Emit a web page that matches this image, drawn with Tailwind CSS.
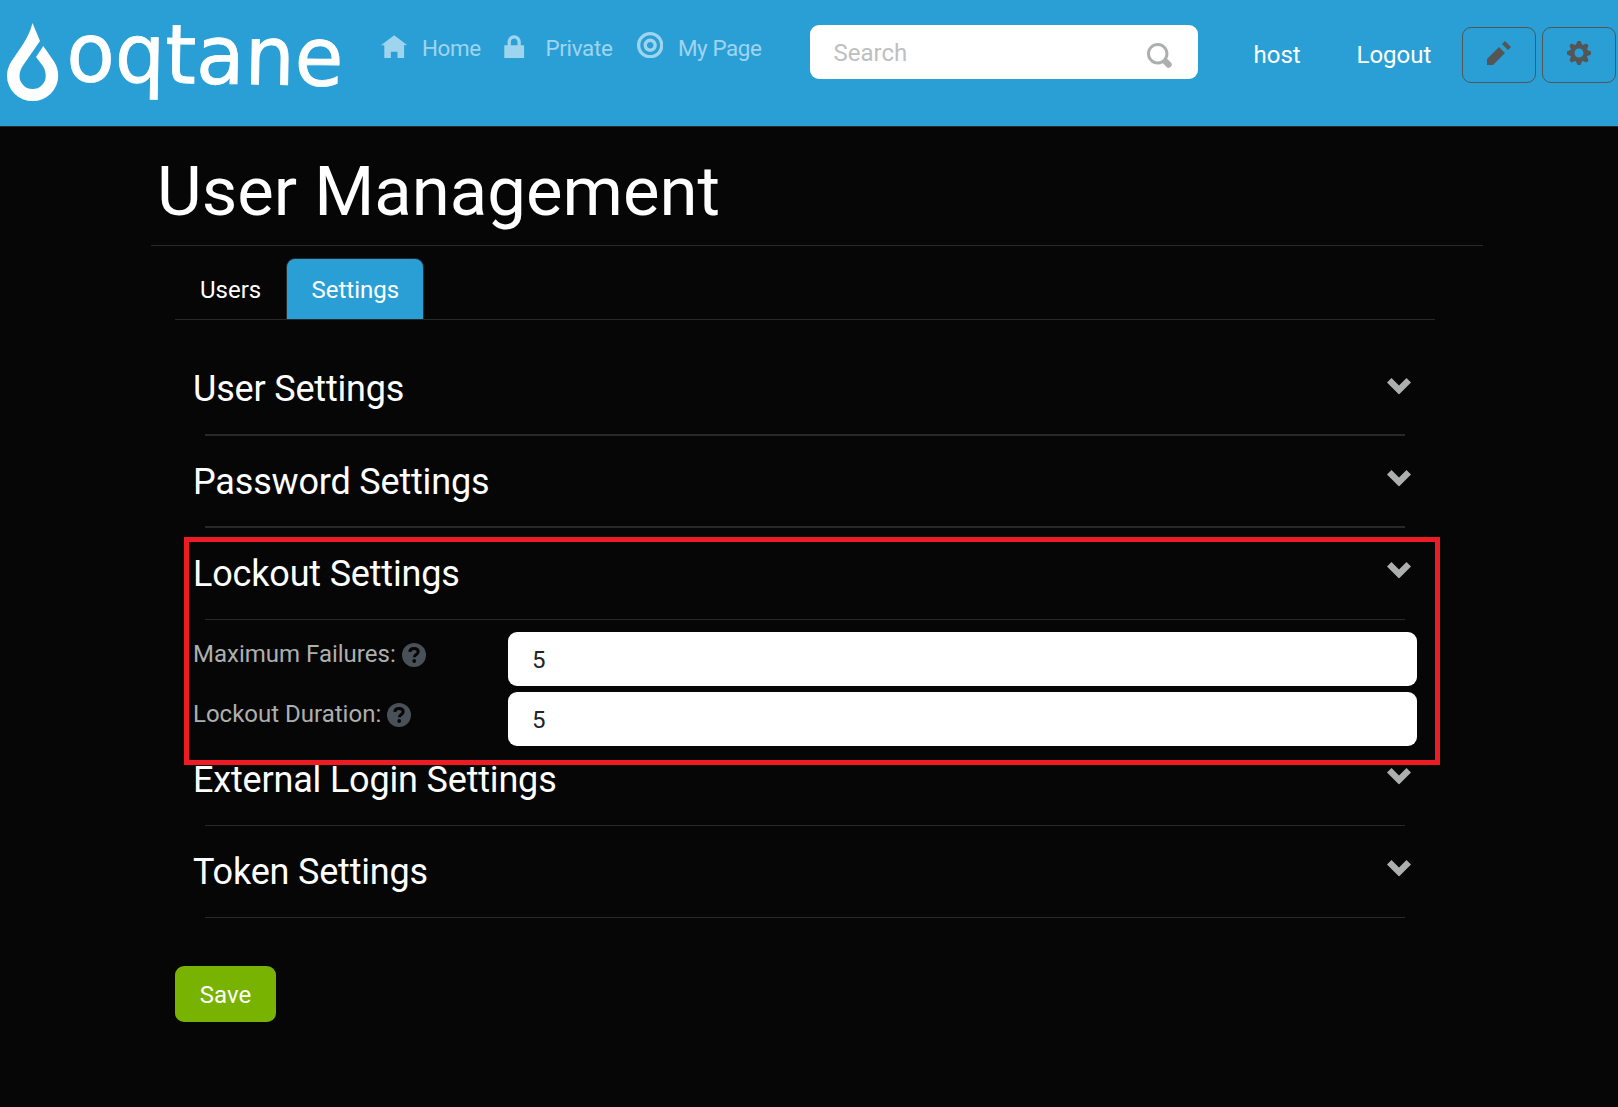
<!DOCTYPE html>
<html lang="en">
<head>
<meta charset="utf-8">
<title>User Management</title>
<script src="https://cdn.jsdelivr.net/npm/@tailwindcss/browser@4"></script>
</head>
<body class="relative h-[1107px] overflow-hidden bg-[#060606] font-['Roboto',sans-serif] text-[24px] leading-[36px] text-white">
<svg class="hidden">
  <symbol id="chevron" viewBox="0 0 8 5.5"><path d="M1.5 0l-1.5 1.5 4 4 4-4-1.5-1.5-2.5 2.5-2.5-2.5z"/></symbol>
  <symbol id="help" viewBox="0 0 24 24"><circle cx="12" cy="12" r="12" fill="#495057"/><path d="M7.800 8.900C7.900 6.700 9.600 5.500 12 5.500c2.500 0 4.200 1.300 4.200 3.200 0 2.700-3.900 2.800-3.900 5.500" fill="none" stroke="#060606" stroke-width="3"/><circle cx="12.200" cy="18" r="1.900" fill="#060606"/></symbol>
</svg>
<header class="flex h-[127px] items-start border-b border-[#282828] bg-[#2a9fd6]">
  <svg class="h-[126px] w-[360px] shrink-0 fill-white" viewBox="0 0 360 126">
    <path d="M32.500 23L40 41L24 64Q19.500 70 19.500 76A13 13 0 0 0 45.700 76Q45.700 70 42.500 65.500L36 57L43.300 46L54 61.500Q58.200 68 58.200 76A25.500 25 0 0 1 7 76Q7 68.500 11 62L23.500 43.500Q30 33 32.500 23Z"/>
    <text x="66" y="81" textLength="277" lengthAdjust="spacingAndGlyphs" font-family="DejaVu Sans" font-size="82" stroke="white" stroke-width="0.8" transform="rotate(1 67 81)">oqtane</text>
  </svg>
  <nav class="flex h-[80px] w-[450px] shrink-0 items-start pl-[21px] pt-[30px] text-[22.4px] text-[#9fd4ef]">
    <a class="flex w-[120px]"><svg class="mt-[2px] mr-[14.500px] size-[26.400px] fill-current" viewBox="0 0 8 8"><path d="M4 1l-4 3h1v4h2v-2h2v2h2v-4.030l1 .030-4-3z"/></svg><span class="tracking-[-0.3px]">Home</span></a>
    <a class="flex w-[135.500px]"><svg class="mt-[2px] mr-[18px] size-[26.400px] fill-current" viewBox="0 0 8 8"><path transform="translate(1 1)" d="M3 0c-1.100 0-2 .900-2 2v1h-1v4h6v-4h-1v-1c0-1.100-.900-2-2-2zm0 1c.560 0 1 .440 1 1v1h-2v-1c0-.560.440-1 1-1z"/></svg><span class="tracking-[-0.3px]">Private</span></a>
    <a class="flex whitespace-nowrap"><svg class="mt-[2px] mr-[15px] size-[26.400px] fill-current" viewBox="0 0 8 8"><path d="M4 0c-2.200 0-4 1.800-4 4s1.800 4 4 4 4-1.800 4-4-1.800-4-4-4zm0 1c1.660 0 3 1.340 3 3s-1.340 3-3 3-3-1.340-3-3 1.340-3 3-3zm0 1c-1.100 0-2 .900-2 2s.900 2 2 2 2-.900 2-2-.900-2-2-2zm0 1c.560 0 1 .440 1 1s-.440 1-1 1-1-.440-1-1 .440-1 1-1z"/></svg><span class="tracking-[-0.4px]">My Page</span></a>
  </nav>
  <div class="mt-[25px] flex h-[54px] w-[388px] shrink-0 items-start justify-between rounded-[9px] bg-white pr-[26.500px] pl-[23.500px] text-[#bfbfbf]">
    <span class="mt-[10px]">Search</span>
    <svg class="mt-[18px] size-[24.500px] fill-[#adafae]" viewBox="0 0 8 8"><path d="M3.500 0c-1.930 0-3.500 1.570-3.500 3.500s1.570 3.500 3.500 3.500c.590 0 1.170-.140 1.660-.410a1 1 0 0 0 .130.130l1 1a1.020 1.020 0 1 0 1.440-1.440l-1-1a1 1 0 0 0-.160-.130c.270-.490.440-1.060.440-1.660 0-1.930-1.550-3.500-3.500-3.500zm0 1c1.390 0 2.500 1.110 2.500 2.500 0 .660-.240 1.270-.660 1.720-.010.010-.020.020-.030.030a1 1 0 0 0-.130.130c-.440.400-1.040.630-1.690.630-1.390 0-2.500-1.110-2.500-2.500s1.110-2.500 2.500-2.500z"/></svg>
  </div>
  <a class="mt-[37px] ml-[55.500px] w-[103px] shrink-0">host</a>
  <a class="mt-[37px] w-[105.500px] shrink-0">Logout</a>
  <div class="mt-[27px] flex shrink-0 gap-[6px] fill-[#555]">
    <button class="flex h-[56px] w-[74px] justify-center rounded-[9px] border border-[#555] pt-[13px]"><svg class="size-[24px]" viewBox="0 0 8 8"><path d="M6 0l-1 1 2 2 1-1-2-2zm-2 2l-4 4v2h2l4-4-2-2z"/></svg></button>
    <button class="flex h-[56px] w-[74px] justify-center rounded-[9px] border border-[#555] pt-[13px]"><svg class="size-[24px]" viewBox="0 0 8 8"><path d="M3.500 0l-.500 1.190c-.100.030-.190.080-.280.130l-1.190-.500-.720.720.500 1.190c-.050.100-.090.180-.130.280l-1.190.500v1l1.190.500c.040.100.080.180.130.280l-.500 1.190.720.720 1.190-.500c.090.040.180.090.280.130l.500 1.190h1l.500-1.190c.090-.040.190-.080.280-.130l1.190.500.720-.720-.500-1.190c.040-.090.090-.190.130-.280l1.190-.500v-1l-1.190-.500c-.030-.090-.080-.190-.130-.280l.500-1.190-.720-.720-1.190.500c-.090-.040-.190-.090-.280-.130l-.500-1.190h-1zm.500 2.500c.830 0 1.500.670 1.500 1.500s-.670 1.500-1.500 1.500-1.500-.670-1.500-1.500.670-1.500 1.500-1.500z"/></svg></button>
  </div>
</header>
<main class="ml-[151px] w-[1332px]">
  <h1 class="h-[119px] border-b border-[#282828] pt-[24px] pl-[6px] text-[68.9px] leading-[82px]">User Management</h1>
  <div class="ml-[24px] w-[1260px] pt-[12px]">
    <div class="flex h-[62px] border-b border-[#282828]">
      <a class="w-[111px] pt-[14px] pl-[25px]">Users</a>
      <a class="w-[137.500px] rounded-t-[9px] border border-b-0 border-[#282828] bg-[#2a9fd6] pt-[13px] pl-[24.500px]">Settings</a>
    </div>
    <section class="pt-[22px] text-[36px] leading-[42px] tracking-[-0.180px]">
      <div class="flex h-[94px] justify-between pt-[26px] pr-[24px] pl-[18px]"><h2>User Settings</h2><svg class="mt-[10px] h-[16.500px] w-[24px] fill-[#adafae]"><use href="#chevron"/></svg></div>
      <div class="-mt-[2px] ml-[30px] h-[2px] w-[1200px] bg-[#282828]"></div>
      <div class="flex h-[92px] justify-between pt-[25px] pr-[24px] pl-[18px]"><h2>Password Settings</h2><svg class="mt-[9px] h-[16.500px] w-[24px] fill-[#adafae]"><use href="#chevron"/></svg></div>
      <div class="-mt-[2px] ml-[30px] h-[2px] w-[1200px] bg-[#282828]"></div>
      <div class="flex h-[92px] justify-between pt-[25px] pr-[24px] pl-[18px]"><h2>Lockout Settings</h2><svg class="mt-[9px] h-[16.500px] w-[24px] fill-[#adafae]"><use href="#chevron"/></svg></div>
      <div class="-mt-px ml-[30px] h-px w-[1200px] bg-[#282828]"></div>
      <div class="mt-[12px] flex flex-col gap-[6px] pl-[18px] text-[24px] leading-[36px] tracking-normal text-[#adafae]">
        <div class="flex h-[54px]">
          <label class="flex w-[315px] pt-[4px]">Maximum Failures:<svg class="mt-[7px] ml-[6px] size-[24px]"><use href="#help"/></svg></label>
          <div class="w-[909px] rounded-[9px] bg-white pt-[10px] pl-[24px] text-[#212529]">5</div>
        </div>
        <div class="flex h-[54px]">
          <label class="flex w-[315px] pt-[4px]">Lockout Duration:<svg class="mt-[7px] ml-[6px] size-[24px]"><use href="#help"/></svg></label>
          <div class="w-[909px] rounded-[9px] bg-white pt-[10px] pl-[24px] text-[#212529]">5</div>
        </div>
      </div>
      <div class="flex h-[80px] justify-between pt-[13px] pr-[24px] pl-[18px]"><h2>External Login Settings</h2><svg class="mt-[9px] h-[16.500px] w-[24px] fill-[#adafae]"><use href="#chevron"/></svg></div>
      <div class="-mt-px ml-[30px] h-px w-[1200px] bg-[#282828]"></div>
      <div class="flex h-[92px] justify-between pt-[25px] pr-[24px] pl-[18px]"><h2>Token Settings</h2><svg class="mt-[9px] h-[16.500px] w-[24px] fill-[#adafae]"><use href="#chevron"/></svg></div>
      <div class="-mt-px ml-[30px] h-px w-[1200px] bg-[#282828]"></div>
    </section>
    <button class="mt-[48px] h-[56px] w-[101px] rounded-[9px] bg-[#77b300] pt-[2px]">Save</button>
  </div>
</main>
<!-- highlight around the lockout section -->
<div class="absolute top-[537px] left-[184px] h-[228px] w-[1256px] border-[5px] border-[#ed1c24]"></div>
</body>
</html>
